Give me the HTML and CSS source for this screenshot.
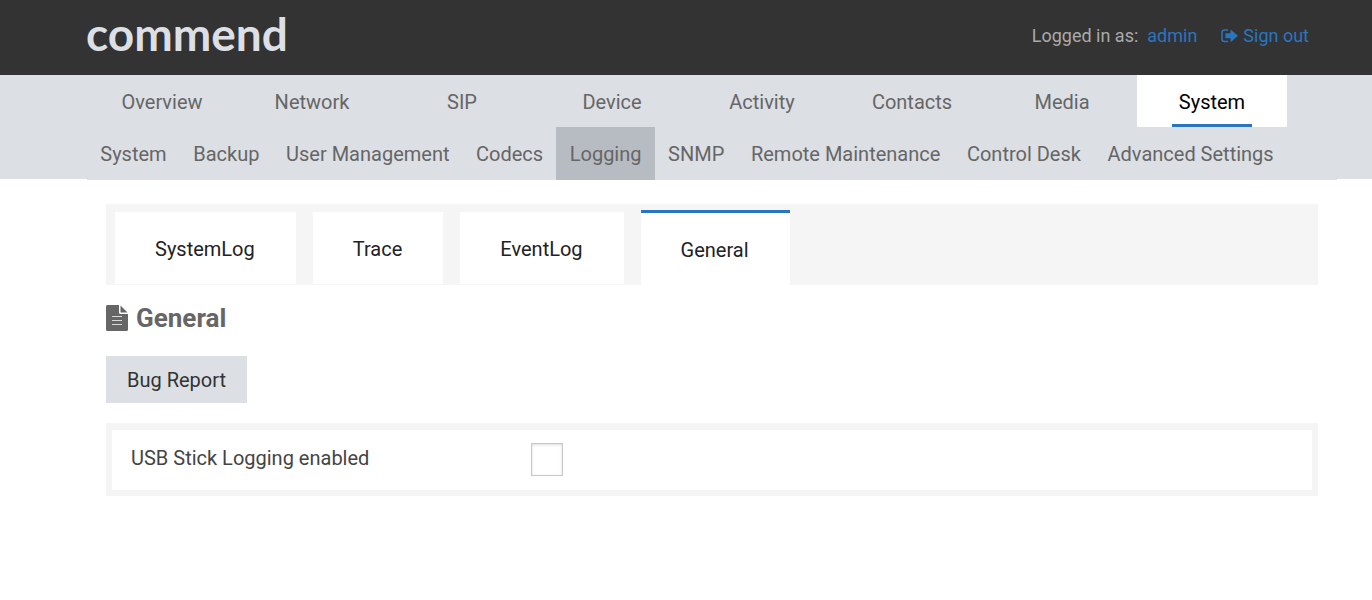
FILE: index.html
```
<!DOCTYPE html>
<html lang="en">
<head>
<meta charset="utf-8">
<title>Commend - Logging</title>
<link rel="stylesheet" href="styles.css">
</head>
<body>
<header class="header">
  <a class="logo" href="#">commend</a>
  <div class="session">
    <span>Logged in as:</span>
    <a class="user" href="#">admin</a>
    <a class="signout" href="#">
      <svg class="signout-icon" viewBox="0 0 17 14" aria-hidden="true">
        <path d="M7 1H3.500Q1 1 1 3.500V10Q1 12.500 3.500 12.500H7" fill="none" stroke="currentColor" stroke-width="1.500"/>
        <path d="M5 4.300h4.500V1.200q0-.8.700-.3l6.200 5.400q.5.500 0 1l-6.200 5.400q-.7.500-.7-.3V9.300H5q-.6 0-.6-.6V4.900q0-.6.600-.6z" fill="currentColor"/>
      </svg>
      Sign out</a>
  </div>
</header>
<div class="navigation">
  <nav class="main-nav" aria-label="Main">
    <a href="#">Overview</a>
    <a href="#">Network</a>
    <a href="#">SIP</a>
    <a href="#">Device</a>
    <a href="#">Activity</a>
    <a href="#">Contacts</a>
    <a href="#">Media</a>
    <a class="current" href="#"><span class="underlined">System</span></a>
  </nav>
  <nav class="sub-nav" aria-label="System">
    <a href="#">System</a>
    <a href="#">Backup</a>
    <a href="#">User Management</a>
    <a href="#">Codecs</a>
    <a class="current" href="#">Logging</a>
    <a href="#">SNMP</a>
    <a href="#">Remote Maintenance</a>
    <a href="#">Control Desk</a>
    <a href="#">Advanced Settings</a>
  </nav>
</div>
<main class="content">
  <nav class="tabs" aria-label="Logging">
    <a class="tab" href="#">SystemLog</a>
    <a class="tab" href="#">Trace</a>
    <a class="tab" href="#">EventLog</a>
    <a class="tab active" href="#">General</a>
  </nav>
  <h1 class="title">
    <svg class="title-icon" viewBox="0 0 22 26" aria-hidden="true">
      <path d="M1.500 0H13v7.500Q13 9 14.500 9H22v15.500q0 1.500-1.500 1.500h-19Q0 26 0 24.500v-23Q0 0 1.500 0z" fill="currentColor"/>
      <path d="M14.500 0.500L21.500 7.500H14.500z" fill="currentColor"/>
      <path d="M6 11.500H16M6 15.500H16M6 19.500H16" stroke="#d8d8d8" stroke-width="1"/>
    </svg>
    General</h1>
  <button class="button" type="button">Bug Report</button>
  <form class="panel">
    <label class="label" for="usb">USB Stick Logging enabled</label>
    <input class="checkbox" id="usb" type="checkbox">
  </form>
</main>
</body>
</html>
```
FILE: styles.css
```
* {
  box-sizing: border-box;
}

body {
  margin: 0;
  background: #fff;
  color: #444;
  font: 20px/24px Roboto, sans-serif;
}

a {
  color: inherit;
  text-decoration: none;
}

.header {
  display: flex;
  align-items: center;
  justify-content: space-between;
  height: 75px;
  padding: 0 63px 4px 86px;
  background: #333;
}

.logo {
  padding-bottom: 4px;
  color: #dcdfe4;
  font: 700 46px/56px Lato, sans-serif;
}

.session {
  display: flex;
  gap: 9px;
  color: #aaa;
  font-size: 18px;
}

.user,
.signout {
  color: #2a75c0;
}

.signout {
  display: flex;
  align-items: center;
  gap: 5px;
  margin-left: 15px;
}

.signout-icon {
  width: 17px;
  height: 14px;
}

.navigation {
  height: 104px;
  padding: 0 35px 0 87px;
  background: #dcdfe4;
  color: #666;
}

.main-nav {
  display: flex;
}

.main-nav a {
  display: flex;
  justify-content: center;
  flex: 0 1 150px;
  line-height: 54px;
  height: 52px;
}

.main-nav .current {
  background: #fff;
  color: #000;
}

.underlined {
  padding: 0 7px;
  border-bottom: 3px solid #2a75c0;
  height: 52px;
}

.sub-nav {
  display: flex;
  height: 53px;
  padding-right: 50px;
  background: #dcdfe4;
}

.sub-nav a {
  flex: 1 0 auto;
  padding: 0 12px;
  line-height: 54px;
  text-align: center;
  white-space: nowrap;
}

.sub-nav .current {
  background: #b7bbc2;
}

.content {
  padding: 25px 54px 0 106px;
}

.tabs {
  display: flex;
  align-items: flex-end;
  gap: 17px;
  height: 81px;
  padding-left: 9px;
  background: #f5f5f5;
}

.tab {
  height: 72px;
  margin-bottom: 1px;
  padding: 0 41px 0 40px;
  background: #fff;
  color: #222;
  line-height: 74px;
}

.tab.active {
  height: 75px;
  margin-bottom: 0;
  border-top: 3px solid #2a75c0;
}

.title {
  display: flex;
  align-items: center;
  gap: 8px;
  margin: 17px 0 22px;
  color: #666;
  font-size: 26px;
  line-height: 32px;
}

.title-icon {
  width: 22px;
  height: 26px;
}

.button {
  display: block;
  height: 47px;
  padding: 0 21px;
  border: 0;
  background: #dcdfe4;
  color: #333;
  font: inherit;
}

.panel {
  display: flex;
  align-items: center;
  margin-top: 20px;
  padding: 13px 19px 14px;
  border: 6px solid #f5f5f5;
  border-top-width: 7px;
}

.label {
  width: 400px;
  padding-bottom: 4px;
}

.checkbox {
  appearance: none;
  width: 32px;
  height: 33px;
  margin: 0;
  border: 1px solid #c8c8c8;
  background: #fff;
  box-shadow: inset 0 1px 3px #ddd;
}

.checkbox:checked {
  background: #2a75c0;
}
```
